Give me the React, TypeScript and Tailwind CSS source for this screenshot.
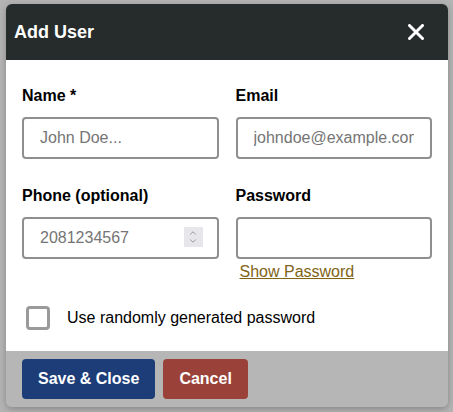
import { ChevronUp, ChevronDown } from "lucide-react"

function Field({ label, placeholder, type = "text", children }: { label: string; placeholder?: string; type?: string; children?: React.ReactNode }) {
  return (
    <div>
      <label className="block text-[16px] font-bold leading-[20px] text-black mb-[11px]">{label}</label>
      <div className="relative">
        <input
          type={type}
          placeholder={placeholder}
          className="block w-full h-[42px] border-2 border-[#8f8f8f] rounded-[4px] bg-white px-4 text-[16px] text-black placeholder:text-[#757575] outline-none"
        />
        {children}
      </div>
    </div>
  )
}

export default function App() {
  return (
    <div className="min-h-screen bg-[#b3b3b3] pt-[4px] pl-[6px]" style={{ fontFamily: '"Liberation Sans", Arial, sans-serif' }}>
      <div className="w-[442px] rounded-[6px] overflow-hidden shadow-[0_2px_6px_rgba(0,0,0,0.25)]">
        {/* Header */}
        <div className="h-[56px] bg-[#262b2b] flex items-center justify-between pl-[8px] pr-[24px]">
          <h2 className="text-[18px] font-bold text-white">Add User</h2>
          <svg width="16" height="16" viewBox="0 0 16 16" className="text-white">
            <path d="M1.5 1.5L14.5 14.5M14.5 1.5L1.5 14.5" stroke="currentColor" strokeWidth="3" strokeLinecap="round" />
          </svg>
        </div>

        {/* Body */}
        <div className="bg-white px-4 pt-[26px] pb-[21px]">
          <div className="grid grid-cols-2 gap-x-[17px] gap-y-[27px]">
            <Field label="Name *" placeholder="John Doe..." />
            <Field label="Email" placeholder="johndoe@example.com" />
            <div>
              <Field label="Phone (optional)" placeholder="2081234567">
                <span className="absolute right-[16px] top-[10px] w-[19px] h-[20px] bg-[#e6e6eb] flex flex-col items-center justify-center text-[#8a8a8a]">
                  <ChevronUp className="w-[10px] h-[10px] -mb-[1px]" strokeWidth={2} />
                  <ChevronDown className="w-[10px] h-[10px] -mt-[1px]" strokeWidth={2} />
                </span>
              </Field>
            </div>
            <div>
              <Field label="Password" type="password" />
              <a href="#" className="block mt-[4px] ml-1 text-[16px] leading-[18px] text-[#7f6415] underline">
                Show Password
              </a>
            </div>
          </div>

          <div className="flex items-center h-[24px] mt-[25px] pl-[4px] gap-[17px]">
            <span className="w-[24px] h-[24px] border-[3px] border-[#9a9a9a] rounded-[4px] bg-white" />
            <span className="text-[16px] text-black">Use randomly generated password</span>
          </div>
        </div>

        {/* Footer */}
        <div className="bg-[#b6b6b6] px-4 py-2 flex gap-2">
          <button className="h-[40px] px-4 rounded-[4px] bg-[#1c3d78] text-white text-[16px] font-bold">Save &amp; Close</button>
          <button className="h-[40px] px-4 rounded-[4px] bg-[#9a423a] text-white text-[16px] font-bold">Cancel</button>
        </div>
      </div>
    </div>
  )
}
